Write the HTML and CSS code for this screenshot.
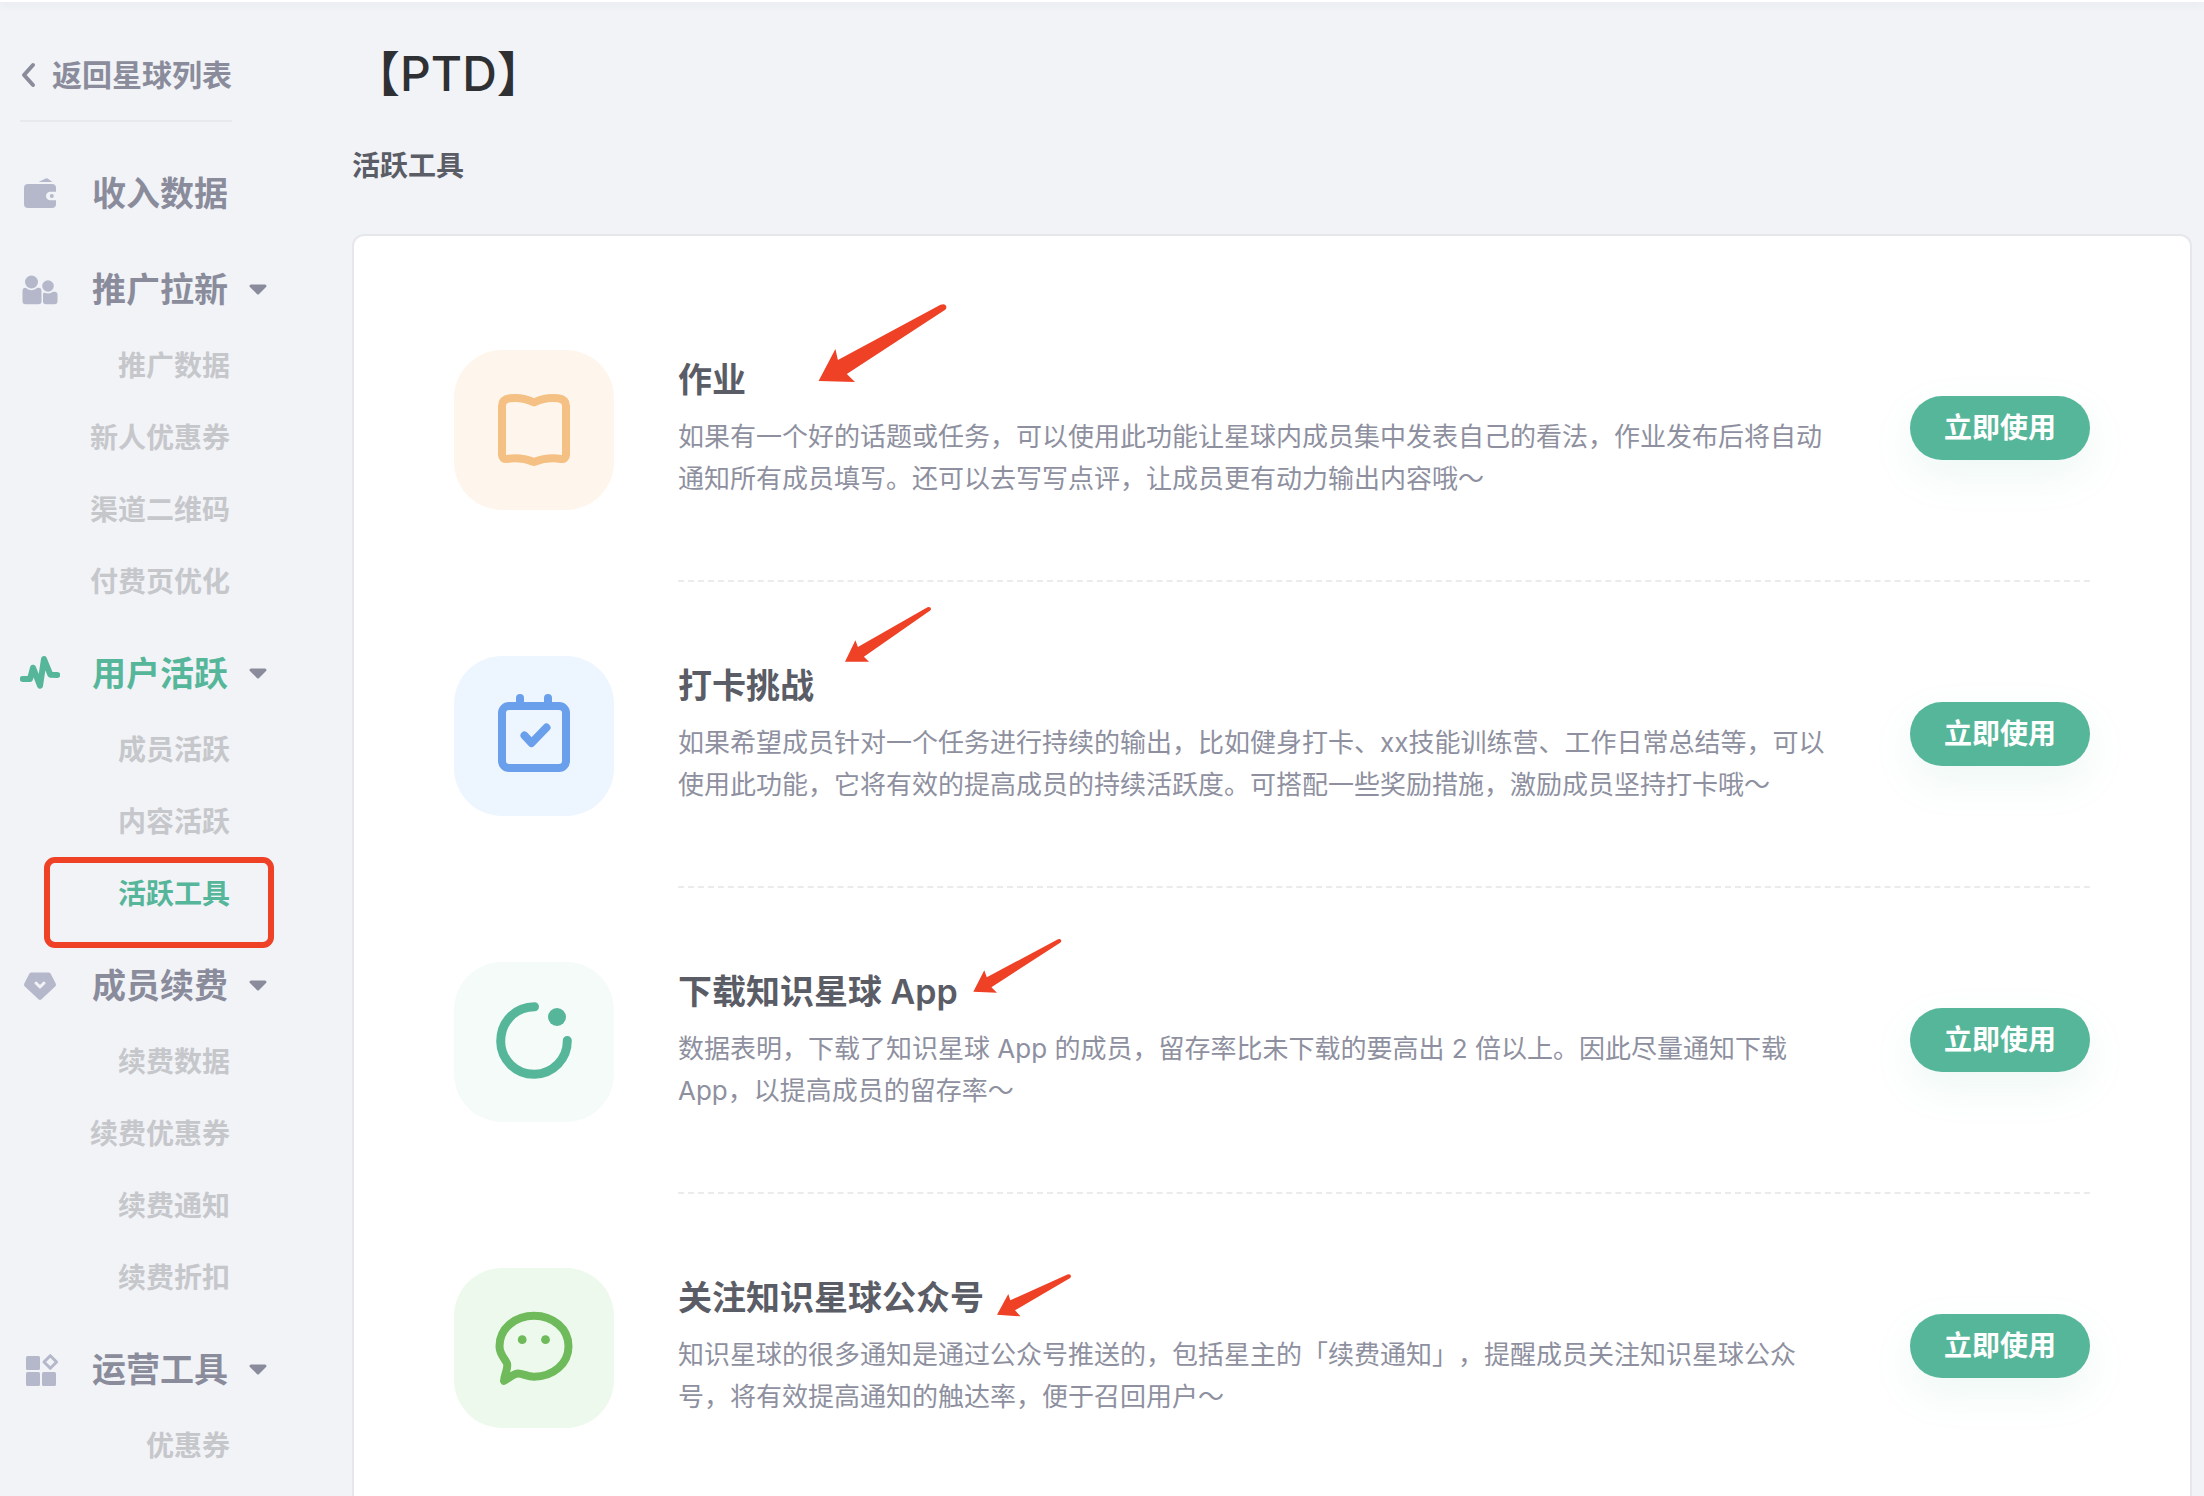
FILE: index.html
```html
<!DOCTYPE html>
<html lang="zh-CN">

<head>
    <meta charset="UTF-8">
    <meta name="viewport" content="width=device-width, initial-scale=1.0">
    <title>活跃工具</title>
    <link rel="stylesheet" href="styles.css">
</head>

<body>
    <div class="topbar"></div>
    <div class="layout">
        <aside class="sidebar">
            <a class="back" href="#">
                <svg width="16" height="28" viewBox="0 0 16 28"><path d="M13 4L4 14l9 10" fill="none" stroke="currentColor" stroke-width="4" stroke-linecap="round" stroke-linejoin="round"/></svg>
                返回星球列表
            </a>

            <nav class="menu">
                <a class="menu-head" href="#">
                    <svg class="menu-icon" viewBox="0 0 40 40"><path d="M18.6 8l7-3.6q1.2-.6 2.3.3L32.500 8zM8 10h24a4 4 0 0 1 4 4v3.700h-5.700a4.300 4.300 0 0 0 0 8.600H36V30a4 4 0 0 1-4 4H8a4 4 0 0 1-4-4V14a4 4 0 0 1 4-4z"/><circle cx="31.800" cy="22" r="2"/></svg>
                    收入数据
                </a>

                <a class="menu-head" href="#">
                    <svg class="menu-icon" viewBox="0 0 40 40"><rect x="2.500" y="17.700" width="19" height="16.600" rx="3"/><rect x="23" y="21.700" width="14.500" height="12.600" rx="3"/><circle class="gap" cx="11.500" cy="12" r="8.300"/><circle class="gap" cx="28" cy="16" r="7.500"/><circle cx="11.500" cy="12" r="6.500"/><circle cx="28" cy="16" r="5.800"/></svg>
                    推广拉新
                    <svg class="caret" viewBox="0 0 20 12"><path d="M3 2h14L10 9z"/></svg>
                </a>
                <ul class="submenu">
                    <li><a href="#">推广数据</a></li>
                    <li><a href="#">新人优惠券</a></li>
                    <li><a href="#">渠道二维码</a></li>
                    <li><a href="#">付费页优化</a></li>
                </ul>

                <a class="menu-head active" href="#">
                    <svg class="menu-icon" viewBox="0 0 40 40"><path class="pulse" d="M2.700 25H10l3-11.300 7 18L24 5l6.300 15.700 7 .3"/></svg>
                    用户活跃
                    <svg class="caret" viewBox="0 0 20 12"><path d="M3 2h14L10 9z"/></svg>
                </a>
                <ul class="submenu">
                    <li><a href="#">成员活跃</a></li>
                    <li><a href="#">内容活跃</a></li>
                    <li class="marked"><a class="active" href="#">活跃工具</a></li>
                </ul>

                <a class="menu-head" href="#">
                    <svg class="menu-icon" viewBox="0 0 40 40"><path d="M11.500 6.500h17q1.500 0 2.200 1.300l5 9.700q.8 1.500-.3 2.800L21.500 33.300q-1.500 1.300-3 0L4.600 20.300q-1.100-1.300-.3-2.800l5-9.700q.7-1.300 2.200-1.300z"/><path class="tick" d="M16 17l4 4 4-4"/></svg>
                    成员续费
                    <svg class="caret" viewBox="0 0 20 12"><path d="M3 2h14L10 9z"/></svg>
                </a>
                <ul class="submenu">
                    <li><a href="#">续费数据</a></li>
                    <li><a href="#">续费优惠券</a></li>
                    <li><a href="#">续费通知</a></li>
                    <li><a href="#">续费折扣</a></li>
                </ul>

                <a class="menu-head" href="#">
                    <svg class="menu-icon" viewBox="0 0 40 40"><rect x="6" y="6" width="14" height="14" rx="1.500"/><rect x="6" y="22" width="14" height="14" rx="1.500"/><rect x="22" y="22" width="14" height="14" rx="1.500"/><path class="outline" d="M30.300 5.700l6.300 6.300-6.300 6.300L24 12z"/></svg>
                    运营工具
                    <svg class="caret" viewBox="0 0 20 12"><path d="M3 2h14L10 9z"/></svg>
                </a>
                <ul class="submenu">
                    <li><a href="#">优惠券</a></li>
                </ul>
            </nav>
        </aside>

        <main class="main">
            <h1>【PTD】</h1>
            <h2>活跃工具</h2>

            <div class="card">
                <section class="tool">
                    <div class="tile orange">
                        <svg viewBox="0 0 160 160"><path d="M80 52.500c-9-4.500-18-5-24-4.200-5 .7-8 3-8 7.700v49c0 2.500 2 4.500 5 4 9-1.500 18-.5 27 3 9-3.500 18-4.500 27-3 3 .5 5-1.500 5-4V56c0-4.700-3-7-8-7.700-6-.8-15-.3-24 4.200z"/></svg>
                    </div>
                    <div class="tool-body">
                        <div class="tool-text">
                            <h3>作业</h3>
                            <p>如果有一个好的话题或任务，可以使用此功能让星球内成员集中发表自己的看法，作业发布后将自动通知所有成员填写。还可以去写写点评，让成员更有动力输出内容哦～</p>
                        </div>
                        <button class="use-btn" type="button">立即使用</button>
                    </div>
                    <svg class="arrow arrow-1" width="130" height="80" viewBox="0 0 130 80"><path d="M.6 79L17.400 47l2.500 11L122.500 2.800q5-2 5.900 2.200.2 1.500-1.200 2.800L28.800 72l8.200 8z"/></svg>
                </section>

                <section class="tool">
                    <div class="tile blue">
                        <svg viewBox="0 0 160 160"><rect x="48" y="50" width="64" height="62" rx="7"/><path d="M66 42v8M94 42v8M70.500 79.500l7 7.500 15-15.500"/></svg>
                    </div>
                    <div class="tool-body">
                        <div class="tool-text">
                            <h3>打卡挑战</h3>
                            <p>如果希望成员针对一个任务进行持续的输出，比如健身打卡、xx技能训练营、工作日常总结等，可以使用此功能，它将有效的提高成员的持续活跃度。可搭配一些奖励措施，激励成员坚持打卡哦～</p>
                        </div>
                        <button class="use-btn" type="button">立即使用</button>
                    </div>
                    <svg class="arrow arrow-2" width="90" height="58" viewBox="0 0 90 58"><path d="M0 56.700l10.400-21.400 2.500 6.700L82.500 2.300q3-1 3.500 1.500 0 1-.8 1.700L18.900 51.700l5.100 5z"/></svg>
                </section>

                <section class="tool">
                    <div class="tile green">
                        <svg viewBox="0 0 160 160"><path d="M80.500 44.700C61 44.700 46.700 60 46.700 79.500a33.300 33.300 0 0 0 66.600-1"/><circle class="dot" cx="103" cy="55" r="9"/></svg>
                    </div>
                    <div class="tool-body">
                        <div class="tool-text">
                            <h3>下载知识星球 App</h3>
                            <p>数据表明，下载了知识星球 App 的成员，留存率比未下载的要高出 2 倍以上。因此尽量通知下载 App，以提高成员的留存率～</p>
                        </div>
                        <button class="use-btn" type="button">立即使用</button>
                    </div>
                    <svg class="arrow arrow-3" width="90" height="58" viewBox="0 0 90 58"><path d="M.3 55.700l11-21.400 2.500 7L85 3.200q3-1 3.300 1.500 0 1-.8 1.700L18.400 51.300l5.600 5.400z"/></svg>
                </section>

                <section class="tool">
                    <div class="tile lime">
                        <svg viewBox="0 0 160 160"><path d="M80 47.700c19 0 34.500 13 34.500 30.500S99 108.700 80 108.700c-7 0-11-3.200-16-3.200-4 0-8 4-14 7.300.5-7 4.500-12 3-17.300-1.500-4-7.500-9-7.500-17.300 0-17.500 15.500-30.500 34.500-30.500z"/><circle class="dot" cx="68.200" cy="71.700" r="4.400"/><circle class="dot" cx="91.500" cy="71.700" r="4.400"/></svg>
                    </div>
                    <div class="tool-body">
                        <div class="tool-text">
                            <h3>关注知识星球公众号</h3>
                            <p>知识星球的很多通知是通过公众号推送的，包括星主的「续费通知」，提醒成员关注知识星球公众号，将有效提高通知的触达率，便于召回用户～</p>
                        </div>
                        <button class="use-btn" type="button">立即使用</button>
                    </div>
                    <svg class="arrow arrow-4" width="80" height="50" viewBox="0 0 80 50"><path d="M0 42.700L11.300 22l2 6.300L70.500 2.500q3-1 3.500 1.500 0 1-.8 2L18 38.300l5.500 6z"/></svg>
                </section>
            </div>
        </main>
    </div>
</body>

</html>
```

FILE: styles.css
```css
*,
*::after {
    box-sizing: border-box;
}

html {
    height: 100%;
    overflow: hidden;
}

body {
    margin: 0;
    height: 100%;
    overflow: hidden;
    background-color: #f1f3f7;
    color: #5a5c66;
    font-family: Inter, "Noto Sans CJK SC", sans-serif;
    text-spacing-trim: space-all;
}

a {
    color: inherit;
    text-decoration: none;
}

h1,
h2,
h3,
p,
ul {
    margin: 0;
    padding: 0;
}

.topbar {
    height: 2px;
    background-color: white;
    box-shadow: 0 2px 8px rgba(40, 45, 60, 0.12);
}

.layout {
    display: flex;
    align-items: flex-start;
}

/* Sidebar */
.sidebar {
    flex: none;
    width: 352px;
    padding: 28px 20px 0;
}

.back {
    display: flex;
    align-items: center;
    gap: 16px;
    width: 212px;
    height: 92px;
    border-bottom: 2px solid #e8e9ed;
    color: #8a8c9c;
    font-size: 30px;
    font-weight: 600;
    line-height: 40px;
    white-space: nowrap;
}

.menu {
    display: flex;
    flex-direction: column;
    padding-top: 16px;
}

.menu-head {
    display: flex;
    align-items: center;
    height: 48px;
    margin: 32px 0 16px;
    color: #8a8c9c;
    font-size: 34px;
    font-weight: 600;
    line-height: 48px;
}

.menu-icon {
    width: 40px;
    height: 40px;
    margin-right: 32px;
    fill: #b5b8ca;
}

.menu-icon .gap {
    fill: #f1f3f7;
}

.menu-icon .pulse {
    fill: none;
    stroke: #56b69a;
    stroke-width: 6;
    stroke-linecap: round;
    stroke-linejoin: round;
}

.menu-icon .tick {
    fill: none;
    stroke: #f1f3f7;
    stroke-width: 3;
    stroke-linecap: round;
    stroke-linejoin: round;
}

.menu-icon .outline {
    fill: none;
    stroke: #b5b8ca;
    stroke-width: 3;
    stroke-linejoin: round;
}

.caret {
    width: 20px;
    height: 12px;
    margin-left: 20px;
    fill: #8a8c9c;
    stroke: #8a8c9c;
    stroke-width: 3;
    stroke-linejoin: round;
}

.submenu {
    width: 210px;
    list-style: none;
    color: #c6c7cb;
    font-size: 28px;
    font-weight: 600;
    line-height: 72px;
    text-align: right;
}

.menu .active {
    color: #56b69a;
}

/* red frame around the current entry */
.marked {
    position: relative;
}

.marked::after {
    content: "";
    position: absolute;
    top: -1px;
    left: 24px;
    width: 230px;
    height: 91px;
    border: 6px solid #ee4126;
    border-radius: 11px;
    pointer-events: none;
}

/* Main */
.main {
    flex: 1;
    min-width: 0;
    padding: 40px 12px 0 0;
}

h1 {
    color: #2f3034;
    font-size: 48px;
    font-weight: 500;
    line-height: 64px;
}

h2 {
    margin: 40px 0 48px;
    font-size: 28px;
    font-weight: 600;
    line-height: 40px;
}

.card {
    padding: 40px 100px;
    border: 2px solid #e5e7eb;
    border-radius: 12px;
    background-color: white;
}

.tool {
    position: relative;
    display: flex;
    gap: 64px;
    padding-top: 74px;
}

.tile {
    flex: none;
    width: 160px;
    height: 160px;
    border-radius: 48px;
}

.tile svg {
    display: block;
    fill: none;
    stroke: currentColor;
    stroke-width: 8;
    stroke-linecap: round;
    stroke-linejoin: round;
}

.tile .dot {
    fill: currentColor;
    stroke: none;
}

.orange {
    background-color: #fef6ec;
    color: #f5c084;
}

.blue {
    background-color: #edf5ff;
    color: #6a9fec;
}

.green {
    background-color: #f4fbf9;
    color: #56b69a;
}

.green svg {
    stroke-width: 9;
}

.lime {
    background-color: #eef9ee;
    color: #6fba5a;
}

.tool-body {
    flex: 1;
    display: flex;
    align-items: center;
    gap: 80px;
    padding: 6px 0 80px;
    border-bottom: 2px dashed #ebebeb;
}

.tool:last-child .tool-body {
    border-bottom: 0;
}

.tool-text {
    flex: 1;
}

h3 {
    margin-bottom: 12px;
    font-size: 34px;
    font-weight: 600;
    line-height: 48px;
}

.tool-text p {
    color: #8e90a0;
    font-size: 26px;
    line-height: 42px;
}

.use-btn {
    flex: none;
    width: 180px;
    height: 64px;
    padding: 0;
    border: 0;
    border-radius: 32px;
    background-color: #56b69a;
    box-shadow: 0 16px 40px rgba(86, 182, 154, 0.1);
    color: white;
    font-family: inherit;
    font-size: 28px;
    font-weight: 600;
    line-height: 40px;
    cursor: pointer;
}

/* hand-drawn arrows on top of the list */
.arrow {
    position: absolute;
    fill: #ee4126;
    pointer-events: none;
}

.arrow-1 {
    left: 364px;
    top: 26px;
}

.arrow-2 {
    left: 391px;
    top: 23px;
}

.arrow-3 {
    left: 519px;
    top: 48px;
}

.arrow-4 {
    left: 543px;
    top: 78px;
}
```
